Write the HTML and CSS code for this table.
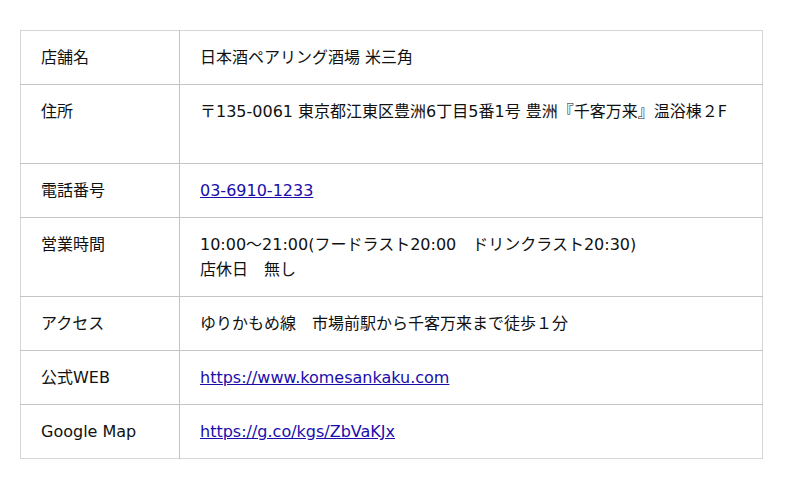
FILE: index.html
```html
<!DOCTYPE html>
<html lang="ja">
<head>
<meta charset="utf-8">
<title>店舗情報</title>
<link rel="stylesheet" href="styles.css">
</head>
<body>
<div class="wrap">
<table class="info">
<tr><th>店舗名</th><td>日本酒ペアリング酒場 米三角</td></tr>
<tr><th>住所</th><td>〒135-0061 東京都江東区豊洲6丁目5番1号 豊洲『千客万来』温浴棟２F<br>&nbsp;</td></tr>
<tr><th>電話番号</th><td><a href="#">03-6910-1233</a></td></tr>
<tr><th>営業時間</th><td>10:00～21:00(フードラスト20:00　ドリンクラスト20:30)<br>店休日　無し</td></tr>
<tr><th>アクセス</th><td>ゆりかもめ線　市場前駅から千客万来まで徒歩１分</td></tr>
<tr><th>公式WEB</th><td><a href="#">https://www.komesankaku.com</a></td></tr>
<tr><th>Google Map</th><td><a href="#">https://g.co/kgs/ZbVaKJx</a></td></tr>
</table>
</div>
</body>
</html>
```
FILE: styles.css
```css
html, body {
  margin: 0;
  padding: 0;
  background: #fff;
}
body {
  font-family: "DejaVu Sans", "Noto Sans CJK JP", sans-serif;
  font-size: 16px;
  color: #111;
}
.wrap {
  padding: 30px 0 0 20px;
}
.info {
  width: 743px;
  border-collapse: collapse;
  border: 1px solid #d6d6d6;
}
.info th,
.info td {
  text-align: left;
  vertical-align: top;
  font-weight: normal;
  line-height: 25px;
  padding: 14px 20px;
  border-top: 1px solid #c4c4c4;
}
.info tr:first-child th,
.info tr:first-child td {
  border-top-color: #d6d6d6;
}
.info th {
  width: 118px;
  border-right: 1px solid #c4c4c4;
}
.info a {
  color: #1a0dab;
  text-decoration: underline;
}
```
